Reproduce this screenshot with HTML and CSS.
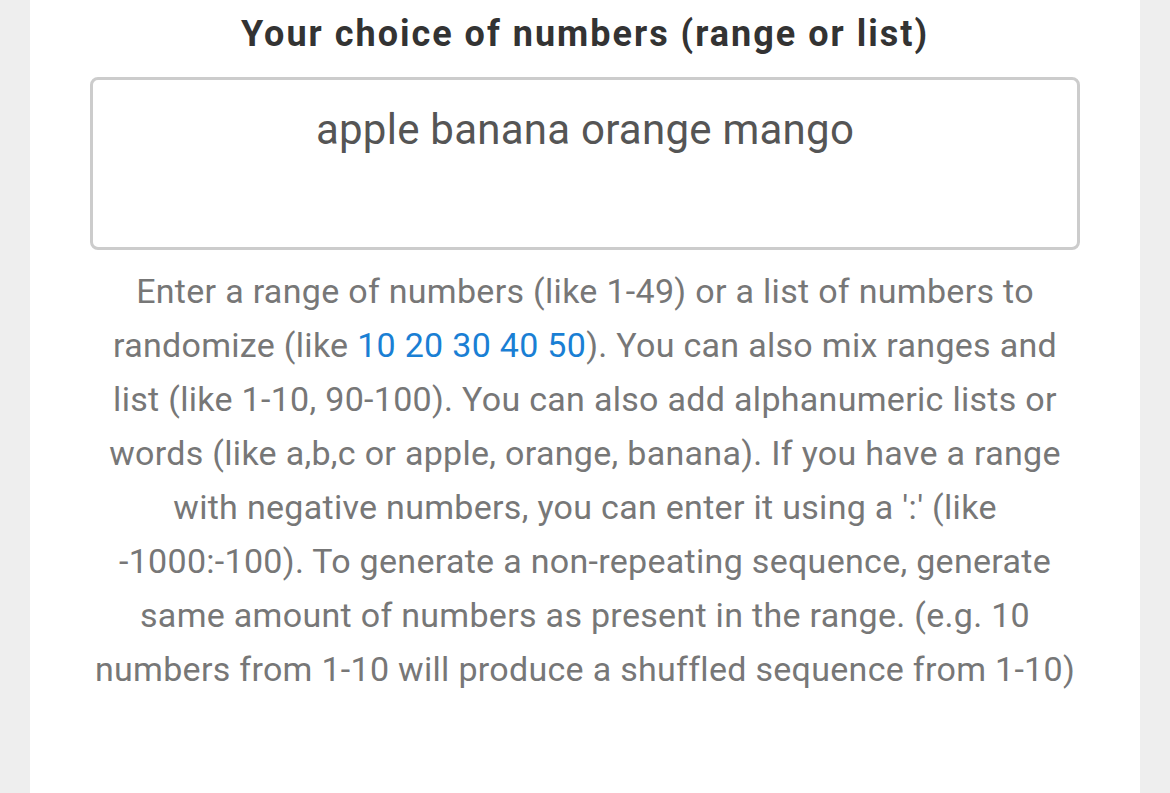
FILE: index.html
```html
<!DOCTYPE html>
<html>
<head>
<meta charset="utf-8">
<link rel="stylesheet" href="styles.css">
</head>
<body>
<div class="card">
  <h2 class="title">Your choice of numbers (range or list)</h2>
  <div class="field">apple banana orange mango</div>
  <p class="help">Enter a range of numbers (like 1-49) or a list of numbers to randomize (like <a class="example" href="#">10 20 30 40 50</a>). You can also mix ranges and list (like 1-10, 90-100). You can also add alphanumeric lists or words (like a,b,c or apple, orange, banana). If you have a range with negative numbers, you can enter it using a ':' (like -1000:-100). To generate a non-repeating sequence, generate same amount of numbers as present in the range. (e.g. 10 numbers from 1-10 will produce a shuffled sequence from 1-10)</p>
</div>
</body>
</html>
```
FILE: styles.css
```css
html, body {
  margin: 0;
  padding: 0;
  background: #eeeeee;
  height: 100%;
}
body {
  font-family: Roboto, "Liberation Sans", sans-serif;
}
.card {
  background: #ffffff;
  margin: 0 30px;
  min-height: 793px;
  padding: 6px 60px 0;
  box-sizing: border-box;
}
.title {
  margin: 0;
  text-align: center;
  font-size: 36px;
  font-weight: 700;
  letter-spacing: 2px;
  color: #333333;
  line-height: 56px;
}
.field {
  margin-top: 15px;
  height: 173px;
  box-sizing: border-box;
  border: 3px solid #cccccc;
  border-radius: 8px;
  text-align: center;
  font-size: 42px;
  letter-spacing: 0.25px;
  color: #555555;
  padding-top: 20px;
  line-height: 60px;
}
.help {
  margin: 14px 0 0;
  text-align: center;
  font-size: 34px;
  letter-spacing: 0.3px;
  line-height: 54px;
  color: #777777;
}
.example {
  color: #1a7fd4;
  text-decoration: none;
}
```
